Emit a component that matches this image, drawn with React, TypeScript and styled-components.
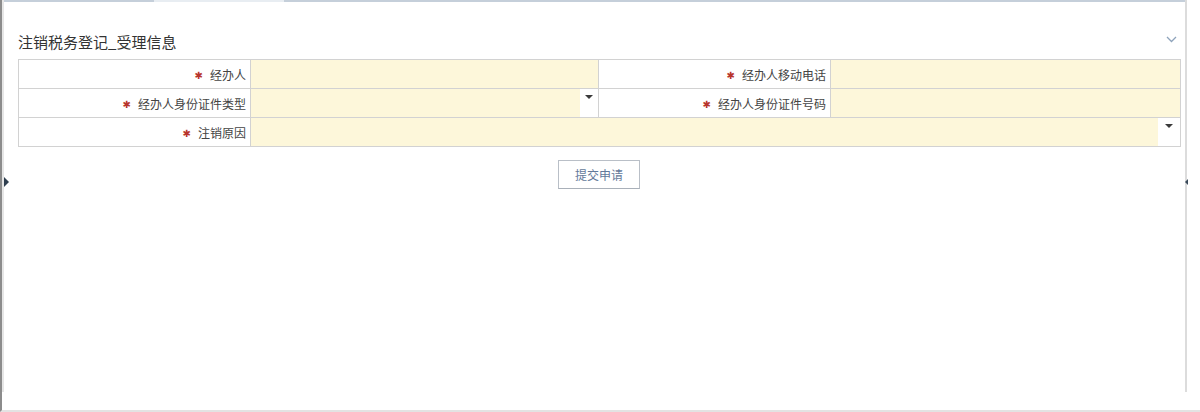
import styled, { createGlobalStyle } from 'styled-components';

const GlobalStyle = createGlobalStyle`
  html, body {
    margin: 0;
    padding: 0;
    background: #fff;
  }
  body {
    font-family: "Noto Sans CJK SC", "Noto Sans", "Liberation Sans", sans-serif;
    color: #333;
  }
`;

type Field = {
  label: string;
  select?: boolean;
};

const rows: { left: Field; right?: Field }[] = [
  { left: { label: '经办人' }, right: { label: '经办人移动电话' } },
  { left: { label: '经办人身份证件类型', select: true }, right: { label: '经办人身份证件号码' } },
  { left: { label: '注销原因', select: true } },
];

export default function App() {
  return (
    <>
      <GlobalStyle />
      <Frame>
        <Panel>
          <TabStrip>
            <TabSeg $w={150} />
            <TabSeg $w={130} $active />
            <TabSeg $w={903} />
          </TabStrip>
          <Body>
            <TitleRow>
              <Title>注销税务登记_受理信息</Title>
              <Chevron viewBox="0 0 11 7" aria-hidden>
                <path d="M1 1 L5.5 5.5 L10 1" fill="none" stroke="#8ea3bb" strokeWidth="1.3" />
              </Chevron>
            </TitleRow>
            <FormTable>
              <colgroup>
                <col style={{ width: 232 }} />
                <col style={{ width: 348 }} />
                <col style={{ width: 232 }} />
                <col style={{ width: 350 }} />
              </colgroup>
              <tbody>
                {rows.map((row, i) => (
                  <tr key={i}>
                    <LabelCell>
                      <Star>✱</Star>
                      {row.left.label}
                    </LabelCell>
                    <ValueCell colSpan={row.right ? 1 : 3}>
                      <ValueInner>
                        <Fill />
                        {row.left.select && (
                          <ArrowZone $w={row.right ? 18 : 22}>
                            <DownArrow />
                          </ArrowZone>
                        )}
                      </ValueInner>
                    </ValueCell>
                    {row.right && (
                      <>
                        <LabelCell>
                          <Star>✱</Star>
                          {row.right.label}
                        </LabelCell>
                        <ValueCell>
                          <ValueInner>
                            <Fill />
                          </ValueInner>
                        </ValueCell>
                      </>
                    )}
                  </tr>
                ))}
              </tbody>
            </FormTable>
            <Actions>
              <SubmitButton type="button">提交申请</SubmitButton>
            </Actions>
          </Body>
          <SideToggle $side="left" />
          <SideToggle $side="right" />
        </Panel>
      </Frame>
    </>
  );
}

const Frame = styled.div`
  height: 412px;
  box-sizing: border-box;
  border-left: 2px solid #8c8c8c;
  border-bottom: 2px solid #e3e3e3;
  display: flex;
  align-items: flex-start;
`;

const Panel = styled.div`
  position: relative;
  width: 1185px;
  height: 392px;
  box-sizing: border-box;
  border-left: 2px solid #e6e6e6;
  border-right: 2px solid #dcdcdc;
`;

const TabStrip = styled.div`
  display: flex;
  height: 2px;
`;

const TabSeg = styled.div<{ $w: number; $active?: boolean }>`
  width: ${(p) => p.$w}px;
  background: ${(p) => (p.$active ? '#e8edf2' : '#c5cfda')};
`;

const Body = styled.div`
  padding: 30px 5px 0 14px;
`;

const TitleRow = styled.div`
  display: flex;
  align-items: center;
  justify-content: space-between;
  height: 20px;
  margin-bottom: 7px;
`;

const Title = styled.h2`
  margin: 0;
  font-size: 15px;
  font-weight: normal;
  line-height: 20px;
  color: #333;
`;

const Chevron = styled.svg`
  width: 11px;
  height: 7px;
  margin-right: 3px;
  margin-top: -5px;
`;

const FormTable = styled.table`
  width: 1162px;
  border-collapse: collapse;
  table-layout: fixed;
  border: 1px solid #cdcdcd;
`;

const LabelCell = styled.td`
  height: 28px;
  padding: 0 4px 0 0;
  border: 1px solid #d2d2d2;
  text-align: right;
  font-size: 12px;
  color: #444;
  background: #fff;
  white-space: nowrap;
`;

const Star = styled.span`
  display: inline-block;
  color: #b8342c;
  margin-right: 7px;
  font-family: "DejaVu Sans", sans-serif;
  font-size: 10px;
  vertical-align: 1px;
`;

const ValueCell = styled.td`
  height: 28px;
  padding: 0;
  border: 1px solid #d2d2d2;
  background: #fdf7da;
`;

const ValueInner = styled.div`
  display: flex;
  height: 28px;
`;

const Fill = styled.div`
  flex: 1;
`;

const ArrowZone = styled.div<{ $w: number }>`
  width: ${(p) => p.$w}px;
  background: #fff;
  display: flex;
  justify-content: center;
  align-items: flex-start;
  padding-top: 6px;
  box-sizing: border-box;
`;

const DownArrow = styled.span`
  width: 0;
  height: 0;
  border-left: 4px solid transparent;
  border-right: 4px solid transparent;
  border-top: 4px solid #3a3a3a;
`;

const Actions = styled.div`
  width: 1162px;
  display: flex;
  justify-content: center;
  padding-top: 13px;
`;

const SubmitButton = styled.button`
  width: 82px;
  height: 29px;
  background: #fff;
  border: 1px solid #b9bfc7;
  border-bottom-color: #a9b0b9;
  font-family: inherit;
  font-size: 12px;
  color: #63799a;
  cursor: pointer;
  padding: 0;
`;

const SideToggle = styled.span<{ $side: 'left' | 'right' }>`
  position: absolute;
  top: ${(p) => (p.$side === 'left' ? 177 : 179)}px;
  ${(p) => (p.$side === 'left' ? 'left: 0;' : 'right: -3px;')}
  width: 0;
  height: 0;
  border-top: ${(p) => (p.$side === 'left' ? 5 : 3)}px solid transparent;
  border-bottom: ${(p) => (p.$side === 'left' ? 5 : 3)}px solid transparent;
  ${(p) =>
    p.$side === 'left'
      ? 'border-left: 5px solid #2f3f4f;'
      : 'border-right: 3px solid #3a4a5a;'}
`;
